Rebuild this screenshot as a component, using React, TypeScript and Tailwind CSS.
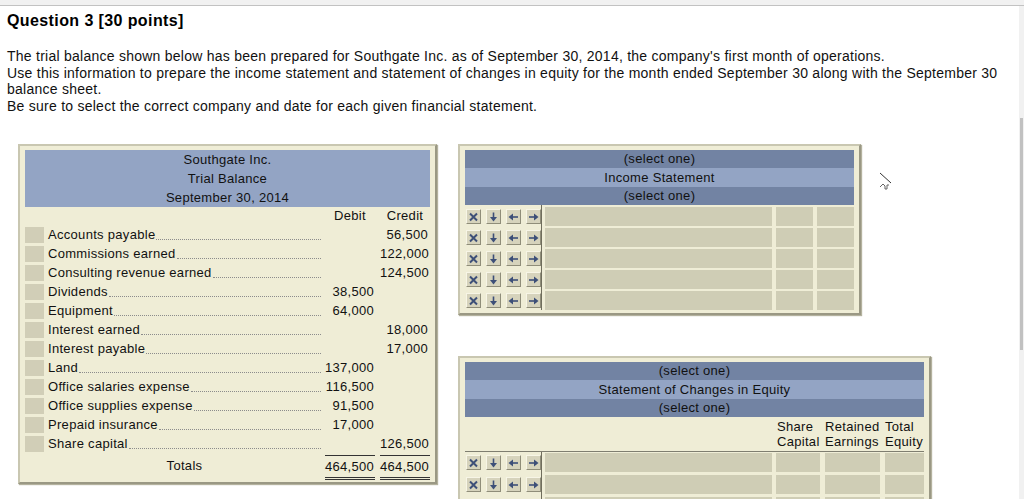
import React from 'react';

type Row = { name: string; debit?: string; credit?: string };

const trialRows: Row[] = [
  { name: 'Accounts payable', credit: '56,500' },
  { name: 'Commissions earned', credit: '122,000' },
  { name: 'Consulting revenue earned', credit: '124,500' },
  { name: 'Dividends', debit: '38,500' },
  { name: 'Equipment', debit: '64,000' },
  { name: 'Interest earned', credit: '18,000' },
  { name: 'Interest payable', credit: '17,000' },
  { name: 'Land', debit: '137,000' },
  { name: 'Office salaries expense', debit: '116,500' },
  { name: 'Office supplies expense', debit: '91,500' },
  { name: 'Prepaid insurance', debit: '17,000' },
  { name: 'Share capital', credit: '126,500' },
];

/* ---------------- small bevel buttons ---------------- */
const Glyph = ({ kind }: { kind: 'x' | 'down' | 'left' | 'right' }) => {
  const c = '#3d4f78';
  if (kind === 'x')
    return (
      <svg width="11" height="10" viewBox="0 0 11 10">
        <path d="M2 1.5 L9 8.5 M9 1.5 L2 8.5" stroke={c} strokeWidth="2" />
      </svg>
    );
  if (kind === 'down')
    return (
      <svg width="11" height="10" viewBox="0 0 11 10">
        <path d="M5.5 0.5 V6" stroke={c} strokeWidth="1.6" />
        <path d="M2 5 H9 L5.5 9.5 Z" fill={c} />
      </svg>
    );
  if (kind === 'left')
    return (
      <svg width="11" height="10" viewBox="0 0 11 10">
        <path d="M4 5 H10" stroke={c} strokeWidth="1.6" />
        <path d="M0.5 5 L5 1.5 V8.5 Z" fill={c} />
      </svg>
    );
  return (
    <svg width="11" height="10" viewBox="0 0 11 10">
      <path d="M1 5 H7" stroke={c} strokeWidth="1.6" />
      <path d="M10.5 5 L6 1.5 V8.5 Z" fill={c} />
    </svg>
  );
};

const Btn = ({ kind }: { kind: 'x' | 'down' | 'left' | 'right' }) => (
  <div className="w-[15px] h-[15px] flex items-center justify-center bg-[#d6d3bc] border border-t-[#f7f5e6] border-l-[#f7f5e6] border-r-[#8f8d79] border-b-[#8f8d79]">
    <Glyph kind={kind} />
  </div>
);

const BtnGroup = () => (
  <div className="flex items-center gap-[5px] pl-[1px]">
    <Btn kind="x" />
    <Btn kind="down" />
    <Btn kind="left" />
    <Btn kind="right" />
  </div>
);

const frame =
  'bg-[#efedd6] border-2 border-[#c9c7b1] border-r-[#9a9884] border-b-[#9a9884] shadow-[1px_1px_1px_#b4b29e] pt-[4px] px-[5px]';

const HeaderBand = ({ middle }: { middle: string }) => (
  <div className="text-center leading-[19px] text-[#111]">
    <div className="h-[18px] leading-[18px] bg-[#7283a3]">(select one)</div>
    <div className="h-[19px] bg-[#93a4c4]">{middle}</div>
    <div className="h-[18px] leading-[17px] bg-[#7283a3]">(select one)</div>
  </div>
);

const TrialBalance = () => (
  <div className={`${frame} w-[419px] pb-[2px] ml-[11px]`}>
    <div className="bg-[#93a4c4] text-center leading-[19px] text-[#111]">
      <div>Southgate Inc.</div>
      <div>Trial Balance</div>
      <div>September 30, 2014</div>
    </div>

    {/* column heads */}
    <div className="flex h-[18px] leading-[18px]">
      <div className="flex-1" />
      <div className="w-[50px] text-center">Debit</div>
      <div className="w-[5px]" />
      <div className="w-[50px] text-center">Credit</div>
    </div>

    {trialRows.map((r) => (
      <div key={r.name} className="flex items-center h-[19px] leading-[19px]">
        <div className="w-[19px] h-[16px] bg-[#d1ceb7]" />
        <div className="ml-[4px] w-[273px] h-[19px] flex">
          <span className="whitespace-nowrap">{r.name}</span>
          <span className="flex-1 ml-[1px] mb-[4px] self-end border-b border-dotted border-[#8c8c8c]" />
        </div>
        <div className="ml-[4px] w-[50px] text-right pr-[1px]">{r.debit}</div>
        <div className="ml-[5px] w-[50px] text-right pr-[2px]">{r.credit}</div>
      </div>
    ))}

    {/* totals */}
    <div className="flex mt-[2px] leading-[21px]">
      <div className="w-[23px]" />
      <div className="w-[273px] text-center">Totals</div>
      <div className="ml-[4px] w-[50px] text-right pr-[1px] border-t border-[#333] border-b-[3px] border-b-[#333] border-double">
        464,500
      </div>
      <div className="ml-[5px] w-[50px] text-right pr-[2px] border-t border-[#333] border-b-[3px] border-b-[#333] border-double">
        464,500
      </div>
    </div>
  </div>
);

const IncomeStatement = () => (
  <div className={`${frame} w-[403px] pb-[3px]`}>
    <HeaderBand middle="Income Statement" />
    <div className="flex mt-[2px]">
      <div className="w-[76px] flex flex-col gap-[2px]">
        {[0, 1, 2, 3, 4].map((i) => (
          <div key={i} className="h-[19px] flex items-center">
            <BtnGroup />
          </div>
        ))}
      </div>
      <div className="w-[1px] bg-[#6f6d5c] -mt-[2px]" />
      <div className="ml-[3px] flex flex-col gap-[2px]">
        {[0, 1, 2, 3, 4].map((i) => (
          <div key={i} className="flex gap-[4px]">
            <div className="w-[227px] h-[19px] bg-[#cfcdb5]" />
            <div className="w-[37px] h-[19px] bg-[#cfcdb5]" />
            <div className="w-[37px] h-[19px] bg-[#cfcdb5]" />
          </div>
        ))}
      </div>
    </div>
  </div>
);

const ChangesInEquity = () => (
  <div className={`${frame} w-[473px] pb-[3px] mt-[41px]`}>
    <HeaderBand middle="Statement of Changes in Equity" />
    <div className="flex pt-[2px] pb-[2px] leading-[15px] border-b border-[#7f7e70] whitespace-nowrap">
      <div className="w-[311px]" />
      <div className="w-[44px] pl-[1px]">
        Share
        <br />
        Capital
      </div>
      <div className="ml-[5px] w-[55px]">
        Retained
        <br />
        Earnings
      </div>
      <div className="ml-[5px] w-[39px]">
        Total
        <br />
        Equity
      </div>
    </div>
    <div className="flex">
      <div className="w-[76px] flex flex-col gap-[3px] pt-[1px]">
        {[0, 1, 2].map((i) => (
          <div key={i} className="h-[19px] flex items-center">
            <BtnGroup />
          </div>
        ))}
      </div>
      <div className="w-[1px] bg-[#6f6d5c]" />
      <div className="ml-[3px] flex flex-col gap-[3px] pt-[1px]">
        {[0, 1, 2].map((i) => (
          <div key={i} className="flex">
            <div className="w-[227px] h-[19px] bg-[#cfcdb5]" />
            <div className="ml-[4px] w-[44px] h-[19px] bg-[#cfcdb5]" />
            <div className="ml-[5px] w-[55px] h-[19px] bg-[#cfcdb5]" />
            <div className="ml-[5px] w-[39px] h-[19px] bg-[#cfcdb5]" />
          </div>
        ))}
      </div>
    </div>
  </div>
);

const App: React.FC = () => {
  return (
    <div className="relative w-[1024px] h-[499px] overflow-hidden bg-white text-[13px] tracking-[0.3px] text-[#111] font-['Liberation_Sans',Arial,sans-serif]">
      {/* top strip from the page above */}
      <div className="h-[6px] bg-[#f1f1f1] border-b border-[#c2c2c2]" />

      <div className="pl-[7px]">
        <h2 className="mt-[5px] text-[16px] font-bold leading-[20px] tracking-[0.4px] text-black">
          Question 3 [30 points]
        </h2>

        <div className="mt-[17px] text-[14px] tracking-[0.25px] leading-[16.5px] pr-[20px]">
          <p>
            The trial balance shown below has been prepared for Southgate Inc. as of September 30, 2014, the
            company's first month of operations.
          </p>
          <p>
            Use this information to prepare the income statement and statement of changes in equity for the month
            ended September 30 along with the September 30 balance sheet.
          </p>
          <p>Be sure to select the correct company and date for each given financial statement.</p>
        </div>

        <div className="mt-[30px] flex items-start">
          <TrialBalance />
          <div className="ml-[21px] flex flex-col">
            <IncomeStatement />
            <ChangesInEquity />
          </div>
        </div>
      </div>

      {/* mouse pointer left in the capture */}
      <svg className="absolute left-[878px] top-[171px]" width="16" height="20" viewBox="0 0 16 20">
        <path d="M2 2 L13 12" stroke="#333" strokeWidth="1" />
        <path d="M2 16 L5 13 L7 15 L7 18 L9 18 L9 14 L11 14" stroke="#666" strokeWidth="1" fill="none" />
      </svg>

      {/* scrollbar */}
      <div className="absolute right-0 top-[6px] bottom-0 w-[5px] bg-[#f1f1f1]">
        <div className="mt-[112px] ml-[1px] w-[3px] h-[232px] bg-[#c1c1c1]" />
      </div>
    </div>
  );
};

export default App;
